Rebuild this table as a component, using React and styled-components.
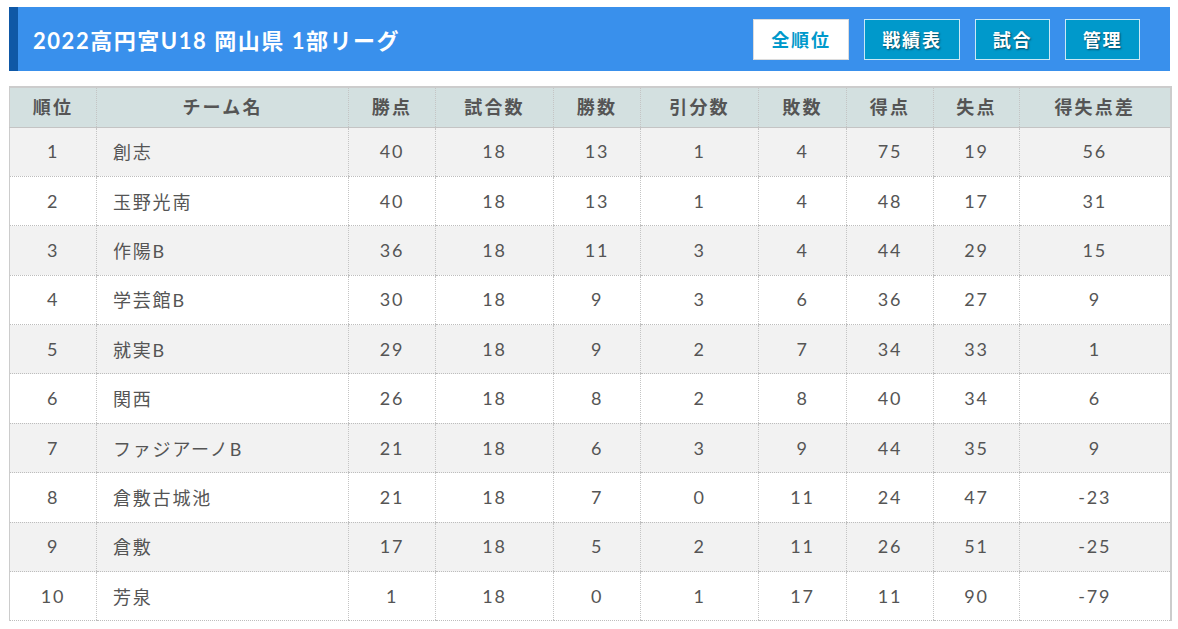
import React from "react";
import styled, { createGlobalStyle } from "styled-components";

const Global = createGlobalStyle`
  html, body { margin: 0; padding: 0; background: #fff; }
  body { font-family: "Lato", "Noto Sans CJK JP", sans-serif; color: #555; }
`;

const Page = styled.div`
  padding: 7px 8px 0 9px;
`;

const Header = styled.header`
  display: flex;
  align-items: center;
  justify-content: space-between;
  height: 64px;
  background: #3990ec;
  border-left: 9px solid #0f58a6;
  padding: 0 30px 0 15px;
  box-sizing: border-box;
`;

const Title = styled.h1`
  margin: 0;
  font-size: 22px;
  font-weight: 700;
  color: #fff;
  letter-spacing: 0.07em;
`;

const Nav = styled.nav`
  display: flex;
  gap: 15px;
`;

const NavButton = styled.a`
  display: flex;
  align-items: center;
  justify-content: center;
  box-sizing: border-box;
  height: 41px;
  width: ${(p) => p.$w}px;
  font-size: 18px;
  font-weight: 700;
  letter-spacing: 0.1em;
  text-decoration: none;
  border: 1px solid ${(p) => (p.$active ? "#dcdcdc" : "#c9e8f6")};
  background: ${(p) => (p.$active ? "#fff" : "#0099cb")};
  color: ${(p) => (p.$active ? "#0099cb" : "#fff")};
  text-shadow: ${(p) => (p.$active ? "none" : "1px 1px 2px rgba(0,0,0,0.55)")};
`;

const Table = styled.table`
  margin-top: 15px;
  width: 1161px;
  border-collapse: collapse;
  table-layout: fixed;
  border-top: 2px solid #cccccc;
  border-left: 1px solid #cccccc;
  border-right: 2px solid #cccccc;
`;

const HeadCell = styled.th`
  box-sizing: border-box;
  height: 40px;
  padding: 0 0 2px;
  background: #d3e0e0;
  color: #555;
  font-size: 18px;
  font-weight: 700;
  letter-spacing: 0.12em;
  text-align: center;
  border-bottom: 1px solid #c4c4c4;
  border-left: 1px dotted #c4c4c4;
  &:first-child { border-left: none; }
`;

const Row = styled.tr`
  background: ${(p) => (p.$odd ? "#f2f2f2" : "#fff")};
`;

const Cell = styled.td`
  box-sizing: border-box;
  height: 49.4px;
  padding: 0 0 1px ${(p) => (p.$left ? "16px" : "0")};
  font-size: 18px;
  color: #555;
  letter-spacing: 0.1em;
  text-align: ${(p) => (p.$left ? "left" : "center")};
  border-bottom: 1px dotted #bdbdbd;
  border-left: 1px dotted #c4c4c4;
  &:first-child { border-left: none; }
`;

const widths = [87, 252, 87, 118, 87, 118, 88, 87, 86, 151];
const headers = ["順位", "チーム名", "勝点", "試合数", "勝数", "引分数", "敗数", "得点", "失点", "得失点差"];

const rows = [
  [1, "創志", 40, 18, 13, 1, 4, 75, 19, 56],
  [2, "玉野光南", 40, 18, 13, 1, 4, 48, 17, 31],
  [3, "作陽B", 36, 18, 11, 3, 4, 44, 29, 15],
  [4, "学芸館B", 30, 18, 9, 3, 6, 36, 27, 9],
  [5, "就実B", 29, 18, 9, 2, 7, 34, 33, 1],
  [6, "関西", 26, 18, 8, 2, 8, 40, 34, 6],
  [7, "ファジアーノB", 21, 18, 6, 3, 9, 44, 35, 9],
  [8, "倉敷古城池", 21, 18, 7, 0, 11, 24, 47, -23],
  [9, "倉敷", 17, 18, 5, 2, 11, 26, 51, -25],
  [10, "芳泉", 1, 18, 0, 1, 17, 11, 90, -79],
];

const buttons = [
  { label: "全順位", w: 96, active: true },
  { label: "戦績表", w: 96 },
  { label: "試合", w: 75 },
  { label: "管理", w: 75 },
];

export default function App() {
  return (
    <Page>
      <Global />
      <Header>
        <Title>2022高円宮U18 岡山県 1部リーグ</Title>
        <Nav>
          {buttons.map((b) => (
            <NavButton key={b.label} $w={b.w} $active={b.active}>
              {b.label}
            </NavButton>
          ))}
        </Nav>
      </Header>
      <Table>
        <colgroup>
          {widths.map((w, i) => (
            <col key={i} style={{ width: w }} />
          ))}
        </colgroup>
        <thead>
          <tr>
            {headers.map((h) => (
              <HeadCell key={h}>{h}</HeadCell>
            ))}
          </tr>
        </thead>
        <tbody>
          {rows.map((r, i) => (
            <Row key={r[0]} $odd={i % 2 === 0}>
              {r.map((v, j) => (
                <Cell key={j} $left={j === 1}>
                  {v}
                </Cell>
              ))}
            </Row>
          ))}
        </tbody>
      </Table>
    </Page>
  );
}
